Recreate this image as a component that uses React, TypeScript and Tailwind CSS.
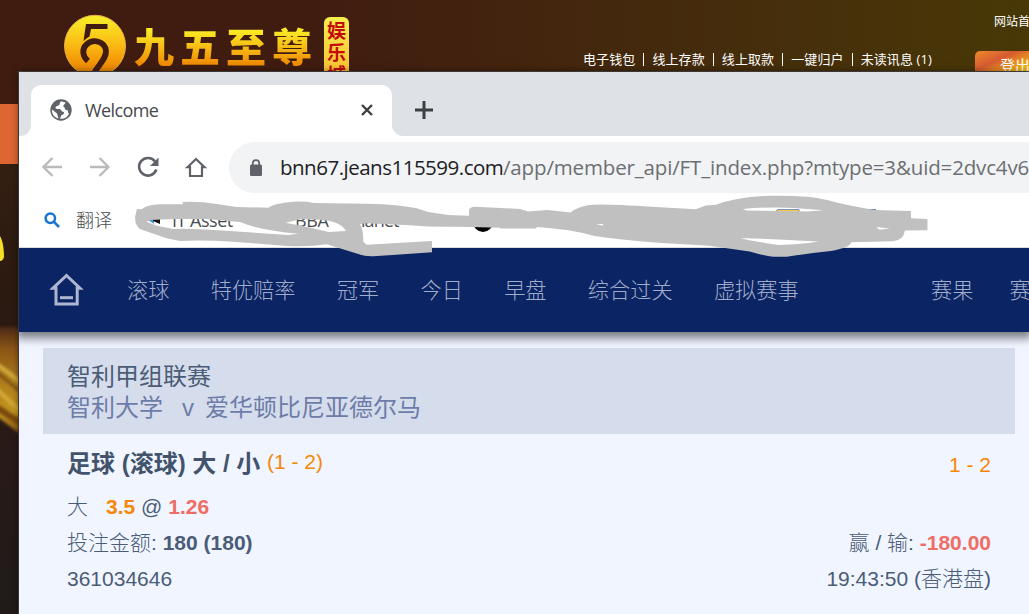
import React from "react";

const cjk = "font-['Liberation_Sans','Noto_Sans_CJK_SC',sans-serif]";
const ui = "font-['Open_Sans','Noto_Sans_CJK_SC',sans-serif]";

function Emblem() {
  return (
    <svg width="64" height="64" viewBox="0 0 64 64" className="shrink-0">
      <defs>
        <linearGradient id="gold" x1="0" y1="0" x2="0" y2="1">
          <stop offset="0" stopColor="#f8f02a" />
          <stop offset="0.5" stopColor="#fbb812" />
          <stop offset="0.85" stopColor="#ee8b02" />
          <stop offset="1" stopColor="#e98400" />
        </linearGradient>
      </defs>
      <circle cx="32" cy="31.8" r="30.5" fill="url(#gold)" stroke="#e6b04a" strokeWidth="1" />
      <path d="M23 10H44.5V15H28L26.5 22.5Q24 23.5 20.5 27Z" fill="#401c10" />
      <path d="M25 47C19.5 42.5 18.5 35 23.5 30.5C30 24.5 42 27 43 37C43.3 45 36 50 30.5 60" fill="none" stroke="#401c10" strokeWidth="5.8" />
    </svg>
  );
}

function SiteHeader() {
  const links = ["电子钱包", "线上存款", "线上取款", "一键归户", "未读讯息 (1)"];
  return (
    <header className="flex h-[104px] bg-gradient-to-r from-[#401c10] from-30% to-[#483806]">
      <div className="flex w-[583px] shrink-0 pl-[63px] pt-[14px]">
        <Emblem />
        <div className="ml-[7px] mt-[6px] h-[54px] w-[182px] whitespace-nowrap bg-gradient-to-b from-[#f9ea24] from-20% to-[#ed8600] to-85% bg-clip-text font-['Noto_Sans_CJK_SC',sans-serif] text-[40px] font-black leading-[50px] tracking-[6px] text-transparent">
          九五至尊
        </div>
        <div className="ml-[8px] mt-[3px] flex h-[84px] w-[25px] flex-col items-center rounded-[6px] bg-gradient-to-b from-[#f7ef50] to-[#f5a81e] pt-[2px] font-['Noto_Sans_CJK_SC',sans-serif] text-[19px] font-bold leading-[22px] text-[#c40b08]">
          <span>娱</span>
          <span>乐</span>
          <span>城</span>
        </div>
      </div>
      <nav className={`flex w-[392px] shrink-0 whitespace-nowrap pt-[50px] text-[13px] leading-[18px] text-white ${ui}`}>
        {links.map((t, i) => (
          <span key={t} className="flex tracking-[0.1px]">
            {i > 0 && <span className="mx-[8px] mt-[3px] h-[13px] w-px bg-white" />}
            {t}
          </span>
        ))}
      </nav>
      <div className={`w-[54px] shrink-0 overflow-hidden whitespace-nowrap text-white ${ui}`}>
        <div className="ml-[19px] mt-[13px] text-[12px] leading-[18px]">网站首页</div>
        <div className="mt-[20px] h-[35px] rounded-tl-[5px] bg-[linear-gradient(155deg,#ee8a2a_0%,#d65a31_32%,#f2b414_65%,#f6cf10_100%)] pl-[25px] pt-[5px] text-[15px] leading-[18px]">登出</div>
      </div>
    </header>
  );
}

function CoinStrip() {
  return (
    <svg width="19" height="450" viewBox="0 164 19 450" className="block">
      <defs>
        <linearGradient id="wall" x1="0" y1="0" x2="0" y2="1">
          <stop offset="0" stopColor="#341f12" />
          <stop offset="0.25" stopColor="#2c1a10" />
          <stop offset="0.6" stopColor="#291a17" />
          <stop offset="1" stopColor="#201b19" />
        </linearGradient>
        <linearGradient id="coin" x1="0" y1="0" x2="0" y2="1">
          <stop offset="0" stopColor="#4a2918" />
          <stop offset="0.2" stopColor="#8a5417" />
          <stop offset="0.55" stopColor="#b3821d" />
          <stop offset="0.8" stopColor="#c5951f" />
          <stop offset="1" stopColor="#6e3c0b" />
        </linearGradient>
        <filter id="soft" x="-50%" y="-10%" width="200%" height="120%"><feGaussianBlur stdDeviation="1.6" /></filter>
      </defs>
      <rect y="164" width="19" height="450" fill="url(#wall)" />
      <path d="M0 236C3 241 4 250 4 257Q3 261 0 261Z" fill="#f5df22" />
      <g filter="url(#soft)">
        <path d="M-5 328Q9 325 24 329V437L-5 415Z" fill="url(#coin)" />
        <path d="M-4 364Q9 373 23 384M-4 388Q8 401 23 412" stroke="#d3ab38" strokeWidth="4" fill="none" />
        <path d="M-4 372Q9 382 23 394" stroke="#7d5114" strokeWidth="3" fill="none" />
        <path d="M-4 407Q9 416 23 424" stroke="#7a480e" strokeWidth="7" fill="none" />
      </g>
    </svg>
  );
}

function Globe() {
  return (
    <svg width="22" height="22" viewBox="0 0 22 22">
      <circle cx="11" cy="11" r="10.7" fill="#5f6368" />
      <path d="M11 2.2C9 4.5 10.5 5.5 8 6.8C7 7.3 6 7 5.5 8.5C5.2 10 7 10 9 10C11.5 10 11 12.5 13 12.8C15 13 14 15.5 12 16C10.5 16.5 11 18 10 19.8C14.5 20.3 17.5 17.8 19 14.7C17.5 13.5 18.8 11.5 16.5 11C14 10.5 15.2 8 13.5 7.6C12.5 7.3 14.2 6 15.5 3.5Z" fill="#fff" />
      <path d="M2 10.5L7 14.5L8.5 19.5C4 18.5 1.7 14.8 2 10.5Z" fill="#fff" />
    </svg>
  );
}

function TabStrip() {
  return (
    <div className="flex h-[64px] shrink-0 items-end bg-[#dee1e6]">
      <div className="h-[11px] w-[12px] bg-white">
        <div className="-mt-px h-[12px] w-[12px] rounded-br-[11px] bg-[#dee1e6]" />
      </div>
      <div className="flex h-[51px] w-[361px] items-center rounded-t-[10px] bg-white pb-px pl-[19px] pr-[18px]">
        <Globe />
        <span className={`ml-[13px] flex-1 text-[18px] leading-[24px] tracking-[-0.6px] text-[#45494d] ${ui}`}>Welcome</span>
        <svg width="14" height="14" viewBox="0 0 14 14"><path d="M2 2L12 12M12 2L2 12" stroke="#3c4043" strokeWidth="2.4" /></svg>
      </div>
      <div className="h-[12px] w-[12px] bg-white"><div className="h-[12px] w-[12px] rounded-bl-[11px] bg-[#dee1e6]" /></div>
      <svg width="20" height="20" viewBox="0 0 20 20" className="mb-[16px] ml-[10px]"><path d="M10 1V19M1 10H19" stroke="#3c4043" strokeWidth="3" /></svg>
    </div>
  );
}

function Toolbar() {
  return (
    <div className="flex h-[62px] shrink-0 items-center">
      <svg width="166" height="24" viewBox="42 155 166 24" className="ml-[23px] shrink-0" fill="none" stroke="#5f6368" strokeWidth="2.3">
        <path d="M62 167H43.5M52.5 158L43.5 167L52.5 176" stroke="#b9babc" />
        <path d="M90 167H108.5M99.5 158L108.5 167L99.5 176" stroke="#b9babc" />
        <path d="M156.3 169.5A8.8 8.8 0 1 1 155 161.5" strokeWidth="2.6" />
        <path d="M158.5 157.5V166H150Z" fill="#5f6368" stroke="none" />
        <path d="M187.5 167.2L196 159L204.5 167.2H202V176H190V167.2Z" strokeWidth="2.2" />
      </svg>
      <div className="ml-[21px] flex h-[51px] flex-1 items-center overflow-hidden rounded-l-full bg-[#f1f3f4] pl-[21px]">
        <svg width="12" height="17" viewBox="0 0 12 17" className="shrink-0">
          <rect y="5.5" width="12" height="11.5" rx="1.5" fill="#5f6368" />
          <path d="M2.8 6V4.3A3.2 3.2 0 0 1 9.2 4.3V6" stroke="#5f6368" strokeWidth="1.7" fill="none" />
        </svg>
        <div className={`ml-[18px] flex whitespace-nowrap text-[20.5px] leading-[28px] text-[#6b6f73] ${ui}`}>
          <span className="w-[223px] tracking-[-0.5px] text-[#202124]">bnn67.jeans115599.com</span>
          <span className="tracking-[-0.15px]">/app/member_api/FT_index.php?mtype=3&amp;uid=2dvc4v6</span>
        </div>
      </div>
    </div>
  );
}

function Bookmarks() {
  return (
    <div className={`flex h-[50px] shrink-0 items-center whitespace-nowrap border-b border-[#dadce0] pb-[6px] text-[18px] leading-[24px] text-[#4a4d50] ${ui}`}>
      <svg width="16" height="16" viewBox="0 0 16 16" className="ml-[25px]"><circle cx="6.3" cy="6.3" r="4.7" stroke="#1976d2" strokeWidth="2.5" fill="none" /><path d="M9.7 9.7L15 15" stroke="#1976d2" strokeWidth="2.6" /></svg>
      <span className="ml-[16px] w-[72px] font-light">翻译</span>
      <svg width="12" height="9" viewBox="0 0 12 9"><path d="M0 5L6 0V9Z" fill="#4b9bd5" /><path d="M6 0H12V9L5 6Z" fill="#111" /></svg>
      <span className="ml-[12px] w-[123px] tracking-[-0.5px]">IT Asset</span>
      <span className="w-[56px] tracking-[-0.4px]">BBA</span>
      <span className="w-[121px] tracking-[-0.9px]">Planet</span>
      <svg width="22" height="22" viewBox="0 0 22 22" className="mt-[4px]"><circle cx="11" cy="11" r="10" fill="#000" /></svg>
      <svg width="110" height="24" viewBox="0 0 110 24" className="ml-[281px]"><path d="M1 5Q1 1.5 3 1.5H24V20H1Z" fill="#f7c948" stroke="#7890b8" /><path d="M90 1H101V20H90Z" fill="#6685b7" /></svg>
    </div>
  );
}

function MarkerStroke() {
  return (
    <svg width="1029" height="614" viewBox="0 0 1029 614" className="pointer-events-none absolute left-0 top-0" fill="#c0c0c0" fillRule="evenodd">
      <path transform="translate(0 135) scale(0.33333)" d="M405 245L411 222L425 223Q440 209 480 208H548V201Q600 199 650 207L710 216L805 218Q820 205 880 200Q920 199 940 204L1100 206Q1200 208 1250 220L1285 231L1345 240L1407 242V224Q1410 216 1425 215L1502 219V278L1380 275Q1300 277 1230 271L1100 265L1080 267Q1090 282 1090 320L1100 329L1296 318V352L1120 364Q1095 365 1075 357L980 328Q930 336 860 333L700 320Q600 314 540 318L500 310L430 286Q405 280 405 245ZM450 255L520 252H620L720 261Q780 286 895 296L865 300L700 289Q570 278 520 282L470 272L440 260ZM857 263L900 253Q970 251 1000 261Q1027 269 1038 288L985 291L940 280Z" />
      <path transform="translate(500 135) scale(0.3374)" d="M0 216L60 219L83 227L140 222L210 230Q215 219 260 208Q300 203 450 213L580 220L610 209L640 207Q700 183 800 180Q920 178 970 193Q1030 210 1110 222L1218 225V247L1267 249V282L1200 283Q1197 311 1165 315L1042 318Q1035 335 980 344Q920 350 850 361H810Q780 357 740 345L620 328L480 320Q360 311 280 299Q210 280 110 273L106 277H0ZM720 219Q800 212 870 216L960 223L910 227L880 226L730 224ZM712 305Q860 310 945 316Q900 325 825 326Q750 315 712 305ZM285 264H305V269ZM1115 273L1155 277L1125 281Z" />
    </svg>
  );
}

function GameNav() {
  const items = ["滚球", "特优赔率", "冠军", "今日", "早盘", "综合过关", "虚拟赛事"];
  return (
    <nav className={`relative flex h-[84px] shrink-0 items-center whitespace-nowrap bg-[#0b2463] text-[21.2px] font-light leading-[30px] text-[#a2accb] shadow-[0_3px_9px_3px_rgba(20,20,25,0.55)] [clip-path:inset(0_0_-20px_0)] ${cjk}`}>
      <svg width="36" height="34" viewBox="0 0 36 34" className="ml-[30px] shrink-0" fill="none" stroke="#aeb6d2" strokeWidth="3">
        <path d="M4 15.2L17.5 2.5L31 15.2H28.2V31H7V15.2Z" />
        <path d="M11 24.7H24" />
      </svg>
      <div className="ml-[42px] mt-[2px] flex w-[804px] shrink-0 gap-[41.3px]">
        {items.map((t) => <span key={t}>{t}</span>)}
      </div>
      <div className="mt-[2px] flex gap-[36px]"><span>赛果</span><span>赛程</span></div>
    </nav>
  );
}

function BetCard() {
  return (
    <main className={`flex-1 bg-[#f0f5ff] pl-[24px] pr-[14px] pt-[16px] text-[21px] text-[#4b5c76] ${cjk}`}>
      <section className="h-[86px] bg-[#d5dceb] pl-[24px] pt-[13px] text-[24px] leading-[31px]">
        <div>智利甲组联赛</div>
        <div className="flex text-[#6d7ca9]"><span className="w-[115px]">智利大学</span><span className="w-[23px]">v</span><span>爱华顿比尼亚德尔马</span></div>
      </section>
      <section className="px-[24px] pt-[12px]">
        <div className="flex h-[36px] items-center justify-between">
          <div className="flex items-center"><b className="w-[200px] whitespace-nowrap text-[24px] leading-[36px] text-[#43536b]">足球 (滚球) 大 / 小</b><span className="-mt-[4px] text-[#f6870a]">(1 - 2)</span></div>
          <span className="mt-[2px] text-[#f6870a]">1 - 2</span>
        </div>
        <div className="mt-[7px] flex h-[36px] items-center"><span className="w-[39px] font-light">大</span><span><b className="text-[#f6870a]">3.5</b> @ <b className="text-[#ef6d65]">1.26</b></span></div>
        <div className="flex h-[36px] items-center justify-between"><span className="font-light">投注金额: <b className="font-bold">180 (180)</b></span><span className="font-light">赢 / 输: <b className="font-bold text-[#ef6d65]">-180.00</b></span></div>
        <div className="flex h-[36px] items-center justify-between"><span>361034646</span><span className="font-light">19:43:50 (香港盘)</span></div>
      </section>
    </main>
  );
}

export default function App() {
  return (
    <div className="relative h-[614px] w-[1029px] overflow-hidden bg-[#201b19]">
      <SiteHeader />
      <div className="h-[60px] bg-[#dd6633]" />
      <CoinStrip />
      <div className="absolute left-[19px] top-[72px] flex h-[542px] w-[1010px] flex-col overflow-hidden bg-white shadow-[0_0_7px_rgba(0,0,0,0.55),0_0_0_1px_#4e4a49]">
        <TabStrip />
        <Toolbar />
        <Bookmarks />
        <GameNav />
        <BetCard />
      </div>
      <MarkerStroke />
    </div>
  );
}
